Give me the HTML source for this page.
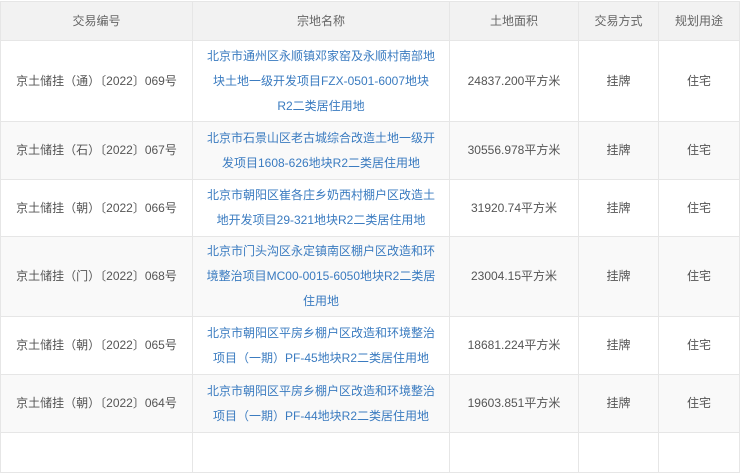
<!DOCTYPE html>
<html><head><meta charset="utf-8"><style>
body{margin:0;width:740px;height:439px;overflow:hidden;background:#fff;font-family:"Liberation Sans","Noto Sans CJK SC",sans-serif;font-size:12px;color:#555}
table{border-collapse:collapse;position:absolute;left:0;top:1px;table-layout:fixed;width:739px}
td,th{border:1px solid #e6e6e6;text-align:center;padding:0 6px;line-height:25px;font-weight:normal}
th{background:#f2f2f2;height:38px;color:#666}
td.n{color:#3a7bc0;padding:0 13px}
tr.g td{background:#f9f9f9}
</style></head><body>
<table>
<colgroup><col style="width:192px"><col style="width:257px"><col style="width:129px"><col style="width:80px"><col style="width:81px"></colgroup>
<tr><th>交易编号</th><th>宗地名称</th><th>土地面积</th><th>交易方式</th><th>规划用途</th></tr>
<tr style="height:81px"><td>京土储挂（通）〔2022〕069号</td><td class="n">北京市通州区永顺镇邓家窑及永顺村南部地块土地一级开发项目FZX-0501-6007地块R2二类居住用地</td><td>24837.200平方米</td><td>挂牌</td><td>住宅</td></tr>
<tr class="g" style="height:58px"><td>京土储挂（石）〔2022〕067号</td><td class="n">北京市石景山区老古城综合改造土地一级开发项目1608-626地块R2二类居住用地</td><td>30556.978平方米</td><td>挂牌</td><td>住宅</td></tr>
<tr style="height:57px"><td>京土储挂（朝）〔2022〕066号</td><td class="n">北京市朝阳区崔各庄乡奶西村棚户区改造土地开发项目29-321地块R2二类居住用地</td><td>31920.74平方米</td><td>挂牌</td><td>住宅</td></tr>
<tr class="g" style="height:80px"><td>京土储挂（门）〔2022〕068号</td><td class="n">北京市门头沟区永定镇南区棚户区改造和环境整治项目MC00-0015-6050地块R2二类居住用地</td><td>23004.15平方米</td><td>挂牌</td><td>住宅</td></tr>
<tr style="height:58px"><td>京土储挂（朝）〔2022〕065号</td><td class="n">北京市朝阳区平房乡棚户区改造和环境整治项目（一期）PF-45地块R2二类居住用地</td><td>18681.224平方米</td><td>挂牌</td><td>住宅</td></tr>
<tr class="g" style="height:58px"><td>京土储挂（朝）〔2022〕064号</td><td class="n">北京市朝阳区平房乡棚户区改造和环境整治项目（一期）PF-44地块R2二类居住用地</td><td>19603.851平方米</td><td>挂牌</td><td>住宅</td></tr>
<tr style="height:40px"><td></td><td></td><td></td><td></td><td></td></tr>
</table>
</body></html>
